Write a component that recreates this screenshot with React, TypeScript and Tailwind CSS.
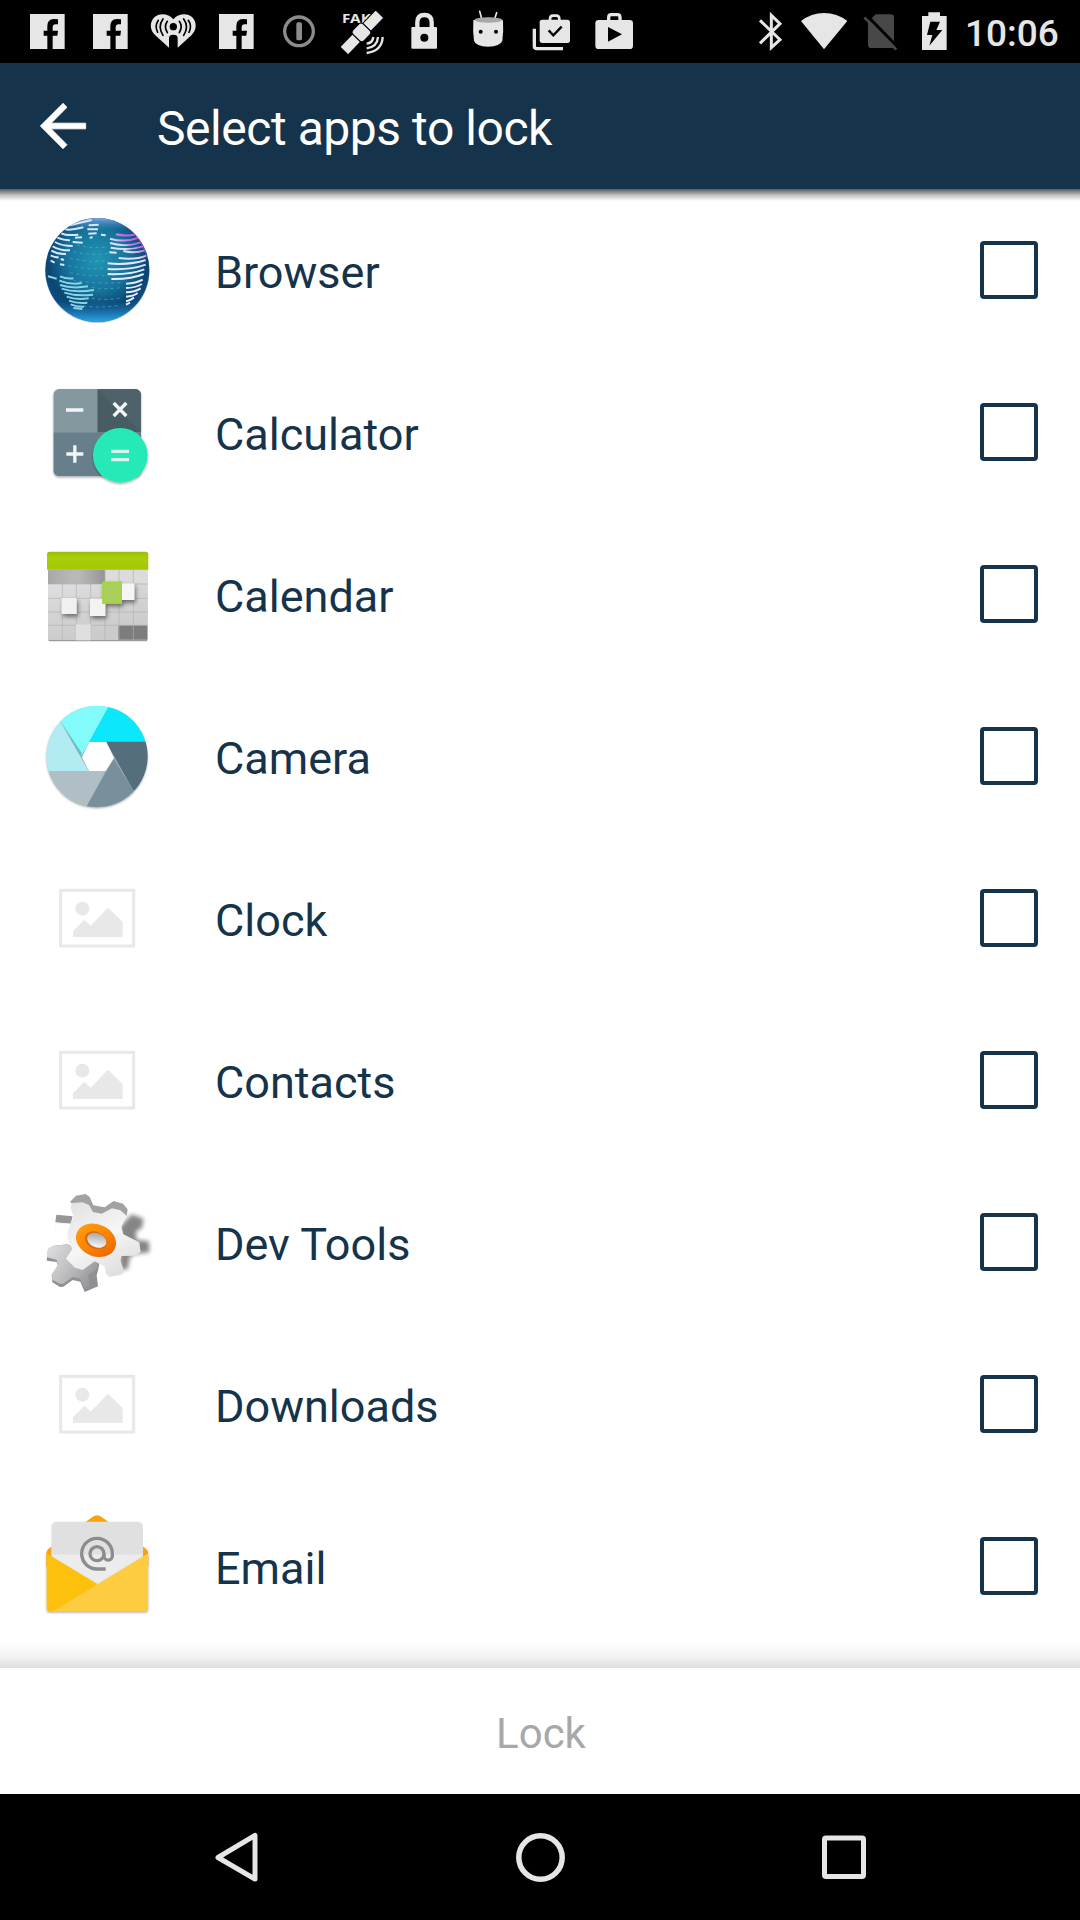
import type { ReactNode } from 'react';

const LIGHT = '#e6e6e6';

function StatusIcon({ box, className = 'w-[63px]', children }: { box: string; className?: string; children: ReactNode }) {
  return (
    <svg viewBox={box} className={`h-[63px] shrink-0 ${className}`} aria-hidden="true">
      {children}
    </svg>
  );
}

function FacebookMark() {
  return (
    <StatusIcon box="48 0 189 189">
      <path
        fill={LIGHT}
        d="M90 42H194V147H158V107H172L174 92H158V83Q158 73 167 73H174V58Q168 57 161 57Q142 58 142 78V92H131V107H142V147H90Z"
      />
    </StatusIcon>
  );
}

function StatusBar() {
  return (
    <header className="flex h-[63px] shrink-0 items-center bg-black pl-4">
      <FacebookMark />
      <FacebookMark />
      <StatusIcon box="426 0 189 189">
        <path fill={LIGHT} d="M507 143L465 105C440 80 456 43 487 43Q507 43 520 58Q533 43 553 43C584 43 600 80 575 105L533 143V114Q533 104 520 104Q507 104 507 114Z" />
        <circle cx="520" cy="80" r="11" fill="#000" />
        <g fill="none" stroke="#000" strokeWidth="5" strokeLinecap="round">
          <path d="M502 64Q491 79 502 98M489 57Q472 80 489 106M475 61Q463 79 473 97" />
          <path d="M538 64Q549 79 538 98M551 57Q568 80 551 106M565 61Q577 79 567 97" />
        </g>
      </StatusIcon>
      <FacebookMark />
      <StatusIcon box="804 0 189 189">
        <circle cx="897" cy="94" r="43" fill="none" stroke="#8c8c8c" strokeWidth="10" />
        <rect x="889" y="67" width="17" height="54" rx="5" fill="#8c8c8c" />
      </StatusIcon>
      <StatusIcon box="33 0 189 189">
        <text x="66" y="68" fontFamily="Noto Sans, sans-serif" fontWeight="700" fontSize="39" textLength="112" lengthAdjust="spacingAndGlyphs" fill={LIGHT}>
          FAKE
        </text>
        <g transform="translate(125 98) rotate(-46)" fill={LIGHT} stroke="#000" strokeWidth="3">
          <rect x="-76" y="-17" width="54" height="34" rx="3" />
          <rect x="22" y="-17" width="56" height="34" rx="3" />
          <rect x="-22" y="-24" width="44" height="46" rx="10" />
        </g>
        <g fill="none" stroke={LIGHT} strokeWidth="7">
          <path d="M140 131Q158 129 160 111M140 145Q172 141 174 111M140 159Q186 153 188 111" />
        </g>
      </StatusIcon>
      <StatusIcon box="222 0 189 189">
        <path d="M292 85V67Q292 45 313 45Q335 45 335 67V85" fill="none" stroke={LIGHT} strokeWidth="13" />
        <rect x="274" y="81" width="77" height="65" rx="3" fill={LIGHT} />
        <circle cx="313" cy="113" r="12" fill="#000" />
      </StatusIcon>
      <StatusIcon box="411 0 189 189">
        <path d="M479 34L485 56M530 38L524 56" stroke={LIGHT} strokeWidth="5" strokeLinecap="round" />
        <path d="M460 61Q504 45 549 61Q551 95 547 122Q541 139 504 140Q467 139 462 122Q458 95 460 61Z" fill={LIGHT} />
        <ellipse cx="505" cy="60" rx="41" ry="8" fill="#a8a8a8" />
        <circle cx="482" cy="95" r="6" fill="#000" />
        <circle cx="528" cy="95" r="6" fill="#000" />
      </StatusIcon>
      <StatusIcon box="600 0 189 189">
        <path d="M690 62V57Q690 47 699 47H709Q718 47 718 57V62" fill="none" stroke={LIGHT} strokeWidth="8" />
        <rect x="659" y="59" width="91" height="70" rx="8" fill={LIGHT} />
        <path d="M643 86V138Q643 146 651 146H729" fill="none" stroke={LIGHT} strokeWidth="10" />
        <path d="M686 91L700 106L725 80" fill="none" stroke="#000" strokeWidth="7" />
      </StatusIcon>
      <StatusIcon box="789 0 189 189">
        <path d="M866 63V52Q866 44 874 44H892Q900 44 900 52V63" fill="none" stroke={LIGHT} strokeWidth="10" />
        <rect x="826" y="60" width="113" height="87" rx="10" fill={LIGHT} />
        <path d="M864 81V125L906 103Z" fill="#000" />
      </StatusIcon>

      <div className="ml-auto flex w-[327px] items-center">
        <StatusIcon box="39 0 126 189" className="w-[42px]">
          <path d="M60 61L120 119L94 143V46L120 71L60 130" fill="none" stroke={LIGHT} strokeWidth="9" />
        </StatusIcon>
        <StatusIcon box="165 0 180 189" className="w-[60px]">
          <path d="M183 63Q214 39 252 39Q291 39 322 63L252 148Z" fill={LIGHT} />
        </StatusIcon>
        <StatusIcon box="345 0 165 189" className="w-[55px]">
          <path d="M407 43H452Q462 43 462 53V134Q462 144 452 144H394Q384 144 384 134V66Z" fill="#484848" />
          <path d="M381 47L476 144" stroke="#000" strokeWidth="9" />
          <path d="M373 52L469 149" stroke="#484848" strokeWidth="8" />
        </StatusIcon>
        <StatusIcon box="510 0 150 189" className="w-[50px]">
          <path d="M565 37H600V48H620V150H546V48H565Z" fill={LIGHT} />
          <path d="M571 65H600L589 90H607L568 137L577 105H561Z" fill="#000" />
        </StatusIcon>
        <span className="ml-[5px] text-[37px] leading-[63px] font-medium text-[#e6e6e6]">
          <span className="relative top-[2px]">10:06</span>
        </span>
      </div>
    </header>
  );
}

function AppIcon({ box, children }: { box: string; children: ReactNode }) {
  return (
    <svg viewBox={box} className="h-[120px] w-[120px] shrink-0" aria-hidden="true">
      {children}
    </svg>
  );
}

function BrowserIcon() {
  return (
    <AppIcon box="51 30 360 360">
      <defs>
        <radialGradient id="globe" cx="0.5" cy="0.4" r="0.6">
          <stop offset="0" stopColor="#2295b4" />
          <stop offset="0.5" stopColor="#16739c" />
          <stop offset="0.8" stopColor="#0b4573" />
          <stop offset="1" stopColor="#0f4f88" />
        </radialGradient>
        <linearGradient id="globeRim" x1="0" y1="0" x2="0" y2="1">
          <stop offset="0" stopColor="#7fa6e0" />
          <stop offset="0.12" stopColor="#3a8fc0" stopOpacity="0" />
          <stop offset="0.8" stopColor="#1c7fc4" stopOpacity="0" />
          <stop offset="1" stopColor="#2aa8e4" />
        </linearGradient>
        <linearGradient id="globeLines" gradientUnits="userSpaceOnUse" x1="362" y1="95" x2="300" y2="190">
          <stop offset="0" stopColor="#cf3fe6" />
          <stop offset="0.35" stopColor="#c56be8" />
          <stop offset="0.6" stopColor="#d5dcf6" />
          <stop offset="1" stopColor="#e3ebfa" />
        </linearGradient>
        <clipPath id="globeClip">
          <circle cx="232" cy="210" r="156" />
        </clipPath>
      </defs>
      <circle cx="232" cy="212" r="157" fill="#b9ccd8" />
      <circle cx="232" cy="210" r="156" fill="url(#globe)" />
      <circle cx="232" cy="210" r="156" fill="url(#globeRim)" />
      <g clipPath="url(#globeClip)" fill="none">
        <path d="M265 52Q345 75 378 165L392 160L370 80L290 40Z" fill="#8b4fe0" opacity="0.75" />
        <g stroke="#5ab4cf" strokeWidth="3" strokeDasharray="9 10" opacity="0.6">
          <path d="M170 135Q220 148 265 140M160 155Q220 168 265 160M150 175Q220 190 265 180M145 197Q210 212 260 202M150 218Q210 232 270 225M160 240Q220 252 310 248M215 262Q260 270 310 262M215 295Q260 303 310 292M190 318Q240 325 305 315" />
        </g>
        <g stroke="#d5e8f3" strokeWidth="6">
          <path d="M150 76Q180 68 215 60M136 88Q150 92 190 82M124 100Q140 108 175 104M112 113Q135 122 150 121M105 126Q125 138 158 138M98 139Q120 152 150 151M94 152Q115 164 138 162M92 166Q105 173 116 172M92 182L104 188M165 113L186 112M158 126L188 128M206 76L236 74M202 88L234 88M205 101L230 100M209 113L218 112M243 104L257 106M122 177L132 180M120 193L133 195" />
        </g>
        <g stroke="url(#globeLines)" strokeWidth="6">
          <path d="M288 103Q325 110 344 103M270 116Q315 129 357 113M270 129Q320 143 362 127M272 143Q325 153 369 139M268 157L290 158M310 153Q345 161 374 151M296 174Q345 181 379 167M263 190Q330 196 377 180M263 207Q330 211 377 194M263 222Q330 225 373 208M274 237Q335 238 371 222M318 251Q348 250 368 239M318 264Q345 264 366 252M318 277Q345 276 362 265M318 290Q340 289 353 279M318 304Q330 302 342 293M318 314L330 308" />
        </g>
        <g stroke="#86d3e6" strokeWidth="6">
          <path d="M120 229Q140 238 160 235M118 242Q150 255 185 249M120 255Q155 267 204 259M125 266Q165 279 222 270M133 278Q170 290 219 284M140 290Q170 301 206 295M147 302Q170 311 202 308M152 313Q170 321 192 320M160 324L187 327M84 229L110 236" />
        </g>
      </g>
    </AppIcon>
  );
}

function CalculatorIcon() {
  return (
    <AppIcon box="51 516 360 360">
      <defs>
        <clipPath id="calcClip">
          <rect x="100" y="567" width="263" height="262" rx="18" />
        </clipPath>
        <filter id="calcShadow" x="-20%" y="-20%" width="140%" height="140%">
          <feDropShadow dx="0" dy="4" stdDeviation="3" floodOpacity="0.35" />
        </filter>
      </defs>
      <g filter="url(#calcShadow)">
        <g clipPath="url(#calcClip)">
          <rect x="100" y="567" width="132" height="131" fill="#84989f" />
          <rect x="232" y="567" width="132" height="131" fill="#475b64" />
          <path d="M232 567L364 698V567Z" fill="#4d626b" />
          <rect x="100" y="697" width="264" height="132" fill="#667f8b" />
        </g>
      </g>
      <circle cx="301" cy="766" r="82" fill="#27e9b8" filter="url(#calcShadow)" />
      <g stroke="#f2f5f5" strokeWidth="10">
        <path d="M138 630H190M139 762H190M164.500 736V788" />
        <path d="M281 609L319 648M319 609L281 648" />
        <path d="M273 754H327M273 779H327" stroke="#d5f7ed" />
      </g>
    </AppIcon>
  );
}

function CalendarIcon() {
  return (
    <AppIcon box="51 12 360 360">
      <defs>
        <linearGradient id="calTop" x1="0" y1="0" x2="0" y2="1">
          <stop offset="0" stopColor="#9abd0a" />
          <stop offset="0.35" stopColor="#aace0a" />
          <stop offset="1" stopColor="#a3c900" />
        </linearGradient>
        <linearGradient id="calBody" x1="0" y1="0" x2="0.3" y2="1">
          <stop offset="0" stopColor="#e6e6e6" />
          <stop offset="0.6" stopColor="#d4d4d4" />
          <stop offset="1" stopColor="#cbcbcb" />
        </linearGradient>
        <linearGradient id="calDark" x1="0" y1="0" x2="1" y2="0">
          <stop offset="0" stopColor="#a8a8a8" />
          <stop offset="0.5" stopColor="#bcbcbc" />
          <stop offset="1" stopColor="#959595" />
        </linearGradient>
        <filter id="calShadow" x="-40%" y="-40%" width="200%" height="200%">
          <feDropShadow dx="4" dy="8" stdDeviation="6" floodOpacity="0.5" />
        </filter>
      </defs>
      <rect x="85" y="110" width="297" height="224" rx="4" fill="#9a9a9a" />
      <rect x="84" y="110" width="299" height="220" fill="url(#calBody)" />
      <rect x="84" y="119" width="171" height="43" fill="url(#calDark)" />
      <rect x="255" y="119" width="128" height="41" fill="#dcdcdc" />
      <rect x="295" y="286" width="87" height="43" fill="#7d7d7d" />
      <path d="M127 119V329M169 119V329M212 119V329M255 119V329M297 119V329M340 119V329M84 162H383M84 205H383M84 246H383M84 286H383" stroke="#b0b0b0" strokeWidth="2" />
      <path d="M81 119V73Q81 65 90 65H376Q385 65 385 73V119Z" fill="url(#calTop)" />
      <g filter="url(#calShadow)">
        <rect x="125" y="204" width="45" height="48" fill="#f0f0f0" />
        <rect x="210" y="206" width="46" height="52" fill="#f3f3f3" />
        <rect x="300" y="160" width="43" height="50" fill="#f5f5f5" />
        <rect x="247" y="155" width="59" height="66" fill="#a9d058" />
      </g>
      <rect x="249" y="157" width="55" height="62" fill="none" stroke="#a5d636" strokeWidth="4" />
      <rect x="168" y="283" width="44" height="48" fill="#dfdfdf" />
    </AppIcon>
  );
}

function CameraIcon() {
  return (
    <AppIcon box="51 498 360 360">
      <defs>
        <clipPath id="camClip">
          <circle cx="231" cy="679" r="152" />
        </clipPath>
        <filter id="camShadow">
          <feDropShadow dx="0" dy="4" stdDeviation="3" floodOpacity="0.4" />
        </filter>
      </defs>
      <circle cx="231" cy="679" r="151" fill="#9ab" filter="url(#camShadow)" />
      <g clipPath="url(#camClip)">
        <path d="M270 510L264 533L186 676L121 574L100 510Z" fill="#84fbfb" />
        <path d="M264 533L207 636H400V510H276Z" fill="#0be8fb" />
        <path d="M258 635H400V800H350L341 783Z" fill="#546e7c" />
        <path d="M281 686L341 783L341 850H190L201 826Z" fill="#78909c" />
        <path d="M70 722H257L199 830L180 850H70Z" fill="#b0bec5" />
        <path d="M121 574L206 723H60V560Z" fill="#b2ebf2" />
        <path d="M121 574L186 670L181 677Z" fill="#69bfc8" />
      </g>
      <path d="M208 636H259L282 684L257 723H207L186 682Z" fill="#fff" />
    </AppIcon>
  );
}

function PlaceholderIcon() {
  return (
    <AppIcon box="51 -6 360 360">
      <rect x="122" y="91" width="219" height="167" fill="none" stroke="#e8e8e8" strokeWidth="9" />
      <circle cx="187" cy="146" r="21" fill="#e8e8e8" />
      <path d="M159 231V214L193 179L212 197L264 143L308 186V231Z" fill="#e8e8e8" />
    </AppIcon>
  );
}

function DevToolsIcon() {
  return (
    <AppIcon box="51 6 360 360">
      <defs>
        <linearGradient id="gearFace" x1="0.2" y1="0" x2="0.8" y2="1">
          <stop offset="0" stopColor="#e2e2e2" />
          <stop offset="0.5" stopColor="#f6f6f6" />
          <stop offset="1" stopColor="#dcdcdc" />
        </linearGradient>
        <linearGradient id="gearBack" x1="0" y1="0" x2="1" y2="0.6">
          <stop offset="0" stopColor="#e0e0e2" />
          <stop offset="0.5" stopColor="#c2c2c5" />
          <stop offset="1" stopColor="#98989c" />
        </linearGradient>
        <linearGradient id="gearRing" x1="0" y1="0" x2="1" y2="0.5">
          <stop offset="0" stopColor="#ffa21a" />
          <stop offset="0.5" stopColor="#ff8a00" />
          <stop offset="1" stopColor="#ee6c00" />
        </linearGradient>
        <linearGradient id="gearHole" x1="0" y1="0" x2="0.4" y2="1">
          <stop offset="0" stopColor="#9b9b9b" />
          <stop offset="1" stopColor="#f3f3f3" />
        </linearGradient>
        <filter id="gearBlur" x="-30%" y="-30%" width="160%" height="160%">
          <feGaussianBlur stdDeviation="6" />
        </filter>
      </defs>
      <path d="M300 140L335 103L371 116L366 143L347 155L350 180L387 184L388 217L345 222L330 230L323 268L300 270Z" fill="#858585" filter="url(#gearBlur)" />
      <path d="M150 66L168 47L197 42L209 51L220 76L254 82L281 63L309 71L323 88L320 108L250 110L180 90Z" fill="#a2a2a4" />
      <path d="M109 104L158 109L152 131L106 127Z" fill="#969698" />
      <path d="M80 242L84 208L98 198L143 193L240 240L235 268L230 286L234 319L194 336L181 305L158 300L130 320L120 321L97 307L95 287L114 258L110 246Z" fill="#909093" />
      <path d="M80 231L84 208L98 198L143 193L235 245L232 266L204 285L211 319L194 326L181 296L158 291L130 311L120 311L97 299L95 283L114 254L110 240Z" fill="url(#gearBack)" />
      <path d="M157 69L188 67L207 75L219 96L245 101L276 85L301 91L320 107L304 141L310 163L358 187L362 217L344 227L304 228L301 242L313 275L303 284L268 291L258 281L254 260L224 244L188 270L165 263L138 236L157 207L144 181L142 159L105 154L107 128L151 131L161 110L151 82Z" fill="url(#gearFace)" />
      <path d="M105 154L107 130L151 132L142 159Z" fill="#fff" />
      <g transform="rotate(22 228 181)">
        <ellipse cx="228" cy="181" rx="62" ry="48" fill="url(#gearRing)" />
        <ellipse cx="227" cy="181" rx="34" ry="25" fill="#d26b14" />
        <ellipse cx="230" cy="180" rx="30" ry="21" fill="url(#gearHole)" />
      </g>
    </AppIcon>
  );
}

function EmailIcon() {
  return (
    <AppIcon box="51 48 360 360">
      <defs>
        <clipPath id="mailClip">
          <path d="M79 180H385V350Q385 364 371 364H93Q79 364 79 350Z" />
        </clipPath>
        <filter id="mailShadow">
          <feDropShadow dx="0" dy="4" stdDeviation="2.500" floodOpacity="0.4" />
        </filter>
        <linearGradient id="paper" x1="0" y1="0" x2="0" y2="1">
          <stop offset="0" stopColor="#e0e0e0" />
          <stop offset="0.5" stopColor="#e0e0e0" />
          <stop offset="0.51" stopColor="#ececec" />
          <stop offset="1" stopColor="#ececec" />
        </linearGradient>
      </defs>
      <path d="M79 190Q80 178 92 172L216 82Q231 70 246 82L372 172Q384 178 385 190V230H79Z" fill="#f9a311" />
      <path d="M94 113Q94 95 112 95H351Q369 95 369 113V290H94Z" fill="url(#paper)" />
      <g filter="url(#mailShadow)">
        <g clipPath="url(#mailClip)">
          <path d="M79 190L232 282L110 366H79Z" fill="#fdc00f" />
          <path d="M385 190L96 366H385Z" fill="#fdcc3f" />
        </g>
      </g>
      <g fill="none" stroke="#8c8c8c" strokeWidth="10">
        <circle cx="231" cy="191" r="21" />
        <path d="M257 237H232A46 46 0 1 1 277 191V198A12.500 12.500 0 0 1 252 198V191" />
      </g>
    </AppIcon>
  );
}

const APPS: { name: string; icon: ReactNode }[] = [
  { name: 'Browser', icon: <BrowserIcon /> },
  { name: 'Calculator', icon: <CalculatorIcon /> },
  { name: 'Calendar', icon: <CalendarIcon /> },
  { name: 'Camera', icon: <CameraIcon /> },
  { name: 'Clock', icon: <PlaceholderIcon /> },
  { name: 'Contacts', icon: <PlaceholderIcon /> },
  { name: 'Dev Tools', icon: <DevToolsIcon /> },
  { name: 'Downloads', icon: <PlaceholderIcon /> },
  { name: 'Email', icon: <EmailIcon /> },
];

export default function App() {
  return (
    <div className="flex h-[1920px] w-[1080px] flex-col overflow-hidden bg-white font-['Roboto',sans-serif]">
      <StatusBar />

      <div className="flex h-[126px] shrink-0 items-center bg-[#15334a] pl-[29px]">
        <svg viewBox="0 0 24 24" className="h-[68px] w-[68px]" aria-hidden="true">
          <path d="M20 11H7.830l5.590-5.590L12 4l-8 8 8 8 1.410-1.410L7.830 13H20v-2z" fill="#fff" stroke="#fff" strokeWidth="0.300" />
        </svg>
        <h1 className="ml-[60px] pt-[5px] text-[48px] leading-[56px] font-normal tracking-[-0.45px] text-white">Select apps to lock</h1>
      </div>

      <main className="relative min-h-0 flex-1">
        <div className="pointer-events-none absolute inset-x-0 top-0 h-[12px] bg-linear-to-b from-black/65 via-black/25 to-transparent" />
        <ul>
          {APPS.map((app) => (
            <li key={app.name} className="flex h-[162px] items-center pr-[42px] pl-[37px]">
              {app.icon}
              <span className="ml-[58px] flex-1 pt-[5px] text-[45px] leading-[54px] text-[#15334a]">{app.name}</span>
              <span role="checkbox" aria-checked="false" className="h-[58px] w-[58px] rounded-[4px] border-4 border-[#15334a]" />
            </li>
          ))}
        </ul>
        <div className="pointer-events-none absolute inset-x-0 bottom-0 h-[26px] bg-linear-to-b from-transparent via-black/4 to-black/13" />
      </main>

      <button className="h-[126px] shrink-0 bg-white pt-[4px] pl-[2px] text-[42px] text-[#a8a8a8]">Lock</button>

      <nav className="flex h-[126px] shrink-0 items-center justify-between bg-black pr-[210px] pl-[211px]">
        <svg viewBox="0 0 52 52" className="h-[52px] w-[52px]" fill="none" stroke={LIGHT} strokeWidth="5" strokeLinejoin="round" aria-hidden="true">
          <path d="M44 4.500V48L7 26.500Z" />
        </svg>
        <svg viewBox="0 0 52 52" className="h-[52px] w-[52px]" fill="none" stroke={LIGHT} strokeWidth="5.500" aria-hidden="true">
          <circle cx="25.500" cy="26.500" r="21.700" />
        </svg>
        <svg viewBox="0 0 52 52" className="h-[52px] w-[52px]" fill="none" stroke={LIGHT} strokeWidth="5" aria-hidden="true">
          <rect x="6.500" y="7" width="39" height="38.500" rx="1.500" />
        </svg>
      </nav>
    </div>
  );
}
